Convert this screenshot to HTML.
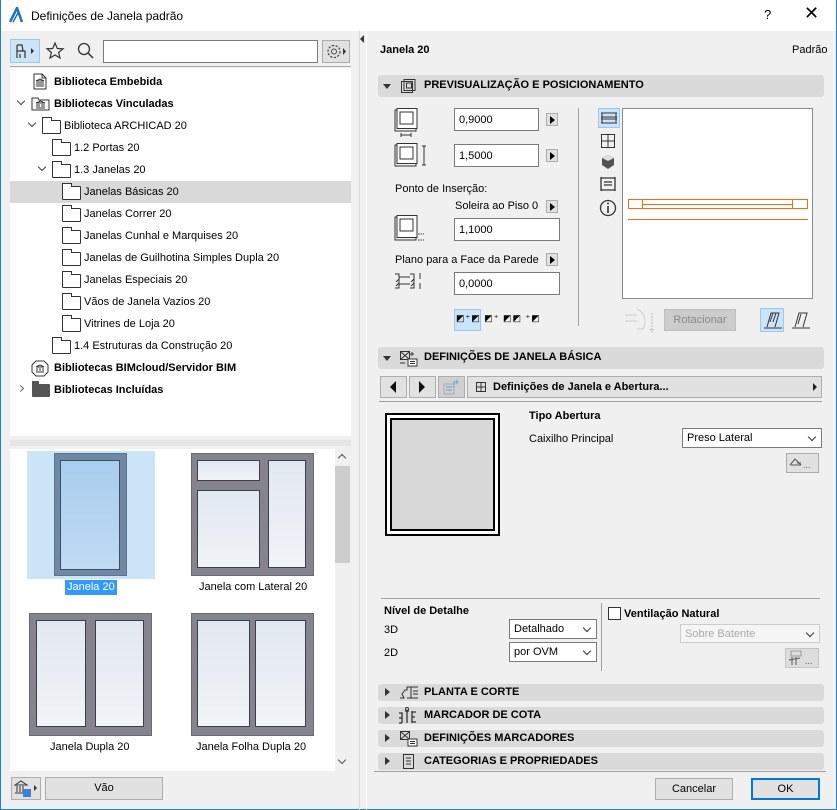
<!DOCTYPE html>
<html><head><meta charset="utf-8"><style>
*{box-sizing:border-box;margin:0;padding:0}
body{width:837px;height:810px;overflow:hidden;background:#f0f0f0;font-family:"Liberation Sans",sans-serif;font-size:11px;color:#000;position:relative}
.a{position:absolute}
.b{font-weight:bold}
.inp{position:absolute;background:#fff;border:1px solid #7a7a7a;padding:5px 4px 0;font-size:11px;height:23px}
.sb{position:absolute;width:12px;height:13px;background:#e1e1e1;border:1px solid #adadad}
.sb:after{content:"";position:absolute;left:3px;top:2px;border-left:5px solid #000;border-top:4px solid transparent;border-bottom:4px solid transparent}
.hdr{position:absolute;left:378px;width:446px;background:#dadada;border-radius:3px;font-weight:bold;font-size:11px}
.hdr span{position:absolute;left:46px;top:4px}
.tri-r{position:absolute;left:7px;width:0;height:0;border-left:5px solid #333;border-top:4px solid transparent;border-bottom:4px solid transparent}
.tri-d{position:absolute;left:5px;width:0;height:0;border-top:5px solid #333;border-left:4px solid transparent;border-right:4px solid transparent}
.fold{position:absolute;width:19px;height:14px;border:1px solid #333;border-radius:1px;background:#fff}
.fold:before{content:"";position:absolute;left:-1px;top:-4px;width:8px;height:3px;border:1px solid #333;border-bottom:none;background:#fff}
.row{position:absolute;height:22px;line-height:22px;font-size:11px}
.chev{position:absolute;width:6px;height:6px;border-right:1.5px solid #444;border-bottom:1.5px solid #444;transform:rotate(45deg)}
.btn{position:absolute;background:#e1e1e1;border:1px solid #adadad;text-align:center;font-size:11px}
.sel{position:absolute;background:#fff;border:1px solid #7a7a7a;padding:3px 4px;height:21px;font-size:11px}
.sel:after{content:"";position:absolute;right:6px;top:5px;width:5px;height:5px;border-right:1px solid #333;border-bottom:1px solid #333;transform:rotate(45deg)}
.win{position:absolute;background:#85848e;border:1px solid #6a6a72}
.gl{position:absolute;background:linear-gradient(#e2e8f0,#f0f3f7);border:1.5px solid #3e3e46}
</style></head><body>
<div class="a" style="left:0;top:0;width:837px;height:810px;border:1px solid #1883d7;border-top:none"></div>
<div class="a" style="left:1px;top:0;width:835px;height:31px;background:#fff"></div>
<svg class="a" style="left:8px;top:7px" width="16" height="16"><path d="M2 15 L9 1 L14 15" fill="none" stroke="#1d6fc4" stroke-width="2.5"/><path d="M5 15 L10 6" stroke="#1d6fc4" stroke-width="1.5"/></svg>
<div class="a" style="left:31px;top:9px;font-size:12px">Definições de Janela padrão</div>
<div class="a" style="left:764px;top:7px;font-size:13px">?</div>
<div class="a" style="left:804px;top:3px;font-size:18px;font-weight:200">✕</div>

<div class="a" style="left:10px;top:39px;width:30px;height:24px;background:#cce4f7;border:1px solid #99c9ef"></div>
<svg class="a" style="left:14px;top:42px" width="24" height="18"><path d="M3 3 L3 16 M3 9 L11 9 L11 16 M3 3 L8 3 L9 9 M6 12 L6 16" fill="none" stroke="#333" stroke-width="1.2"/><path d="M17 6 L20 9 L17 12Z" fill="#333"/></svg>
<svg class="a" style="left:45px;top:41px" width="20" height="20"><path d="M10 2 L12.3 7.5 L18 7.8 L13.6 11.5 L15 17 L10 14 L5 17 L6.4 11.5 L2 7.8 L7.7 7.5Z" fill="none" stroke="#333" stroke-width="1.2"/></svg>
<svg class="a" style="left:76px;top:41px" width="20" height="20"><circle cx="8" cy="8" r="5.5" fill="none" stroke="#333" stroke-width="1.3"/><path d="M12 12 L17 17" stroke="#333" stroke-width="1.5"/></svg>
<div class="a" style="left:103px;top:40px;width:215px;height:23px;background:#fff;border:1px solid #7a7a7a"></div>
<div class="a" style="left:322px;top:40px;width:28px;height:23px;background:#e1e1e1;border:1px solid #adadad"></div>
<svg class="a" style="left:325px;top:43px" width="24" height="17"><circle cx="9" cy="8.5" r="6" fill="none" stroke="#444" stroke-width="1.2" stroke-dasharray="2.2 1.5"/><circle cx="9" cy="8.5" r="2.5" fill="none" stroke="#444"/><path d="M18 5 L21 8.5 L18 12Z" fill="#333"/></svg>
<div class="a" style="left:10px;top:66px;width:341px;height:1px;background:#aaa"></div>

<div class="a" style="left:10px;top:68px;width:341px;height:368px;background:#fff"></div>
<div class="a" style="left:10px;top:181px;width:341px;height:22px;background:#d9d9d9"></div>
<svg class="a" style="left:33px;top:73px" width="14" height="17"><path d="M1 1 L9 1 L13 5 L13 16 L1 16Z M9 1 L9 5 L13 5" fill="#fff" stroke="#333"/><path d="M3 13 L11 13 M4 12 L4 9 M6 12 L6 9 M8 12 L8 9 M10 12 L10 9 M3 8 L7 6 L11 8Z" stroke="#333" fill="none"/></svg>
<div class="row b" style="left:54px;top:71px">Biblioteca Embebida</div>
<div class="chev" style="left:18px;top:98px"></div>
<svg class="a" style="left:31px;top:95px" width="19" height="16"><path d="M1 3 L7 3 L8 5 L18 5 L18 15 L1 15Z" fill="#fff" stroke="#333"/><path d="M5 13 L14 13 M6 12 L6 9 M8 12 L8 9 M11 12 L11 9 M13 12 L13 9 M5 8 L9.5 6 L14 8Z" stroke="#333" fill="none"/></svg>
<div class="row b" style="left:54px;top:93px">Bibliotecas Vinculadas</div>
<div class="chev" style="left:29px;top:120px"></div>
<div class="fold" style="left:42px;top:120px"></div>
<div class="row" style="left:64px;top:115px">Biblioteca ARCHICAD 20</div>
<div class="fold" style="left:52px;top:142px"></div>
<div class="row" style="left:74px;top:137px">1.2 Portas 20</div>
<div class="chev" style="left:39px;top:164px"></div>
<div class="fold" style="left:52px;top:164px"></div>
<div class="row" style="left:74px;top:159px">1.3 Janelas 20</div>
<div class="fold" style="left:62px;top:186px"></div>
<div class="row" style="left:84px;top:181px">Janelas Básicas 20</div>
<div class="fold" style="left:62px;top:208px"></div>
<div class="row" style="left:84px;top:203px">Janelas Correr 20</div>
<div class="fold" style="left:62px;top:230px"></div>
<div class="row" style="left:84px;top:225px">Janelas Cunhal e Marquises 20</div>
<div class="fold" style="left:62px;top:252px"></div>
<div class="row" style="left:84px;top:247px">Janelas de Guilhotina Simples Dupla 20</div>
<div class="fold" style="left:62px;top:274px"></div>
<div class="row" style="left:84px;top:269px">Janelas Especiais 20</div>
<div class="fold" style="left:62px;top:296px"></div>
<div class="row" style="left:84px;top:291px">Vãos de Janela Vazios 20</div>
<div class="fold" style="left:62px;top:318px"></div>
<div class="row" style="left:84px;top:313px">Vitrines de Loja 20</div>
<div class="fold" style="left:52px;top:340px"></div>
<div class="row" style="left:74px;top:335px">1.4 Estruturas da Construção 20</div>
<svg class="a" style="left:31px;top:360px" width="18" height="17"><path d="M5 1 L13 1 L17 5 L17 12 L13 16 L5 16 L1 12 L1 5Z" fill="#fff" stroke="#333"/><path d="M5 12 L13 12 M6 11 L6 8 M9 11 L9 8 M12 11 L12 8 M5 7 L9 5 L13 7Z" stroke="#333" fill="none"/></svg>
<div class="row b" style="left:54px;top:357px">Bibliotecas BIMcloud/Servidor BIM</div>
<div class="a" style="left:18px;top:386px;width:5px;height:5px;border-right:1.5px solid #666;border-top:1.5px solid #666;transform:rotate(45deg)"></div>
<div class="a" style="left:32px;top:384px;width:18px;height:13px;background:#555;border-radius:1px"></div>
<div class="a" style="left:32px;top:381px;width:7px;height:4px;background:#555"></div>
<div class="row b" style="left:54px;top:379px">Bibliotecas Incluídas</div>

<div class="a" style="left:10px;top:440px;width:341px;height:6px;background:#e6e6e6"></div>
<div class="a" style="left:10px;top:449px;width:325px;height:322px;background:#fff"></div>
<div class="a" style="left:335px;top:449px;width:16px;height:322px;background:#f0f0f0"></div>
<div class="a" style="left:335px;top:466px;width:15px;height:97px;background:#cdcdcd"></div>
<div class="a" style="left:339px;top:455px;width:6px;height:6px;border-left:1.5px solid #555;border-top:1.5px solid #555;transform:rotate(45deg)"></div>
<div class="a" style="left:339px;top:757px;width:6px;height:6px;border-right:1.5px solid #555;border-bottom:1.5px solid #555;transform:rotate(45deg)"></div>
<div class="a" style="left:27px;top:451px;width:128px;height:128px;background:#cce4f7"></div>
<div class="win" style="left:54px;top:453px;width:73px;height:123px;background:#6f88a4;border-color:#5a7492"></div>
<div class="gl" style="left:60px;top:460px;width:60px;height:110px;background:linear-gradient(#a9cdee,#c0daf2);border-color:#3e4e62"></div>
<div class="a" style="left:65px;top:580px;height:15px;padding:1px 2px;background:#3399ff;color:#fff;font-size:11px">Janela 20</div>
<div class="win" style="left:191px;top:453px;width:123px;height:123px"></div>
<div class="gl" style="left:197px;top:460px;width:63px;height:21px"></div>
<div class="gl" style="left:197px;top:490px;width:63px;height:78px"></div>
<div class="gl" style="left:268px;top:460px;width:38px;height:108px"></div>
<div class="a" style="left:199px;top:581px;font-size:11px">Janela com Lateral 20</div>
<div class="win" style="left:29px;top:613px;width:123px;height:123px"></div>
<div class="gl" style="left:36px;top:620px;width:50px;height:107px"></div>
<div class="gl" style="left:95px;top:620px;width:49px;height:107px"></div>
<div class="a" style="left:50px;top:741px;font-size:11px">Janela Dupla 20</div>
<div class="win" style="left:191px;top:613px;width:123px;height:123px"></div>
<div class="gl" style="left:197px;top:620px;width:53px;height:107px"></div>
<div class="gl" style="left:255px;top:620px;width:51px;height:107px"></div>
<div class="a" style="left:196px;top:741px;font-size:11px">Janela Folha Dupla 20</div>
<div class="btn" style="left:11px;top:777px;width:30px;height:23px"></div>
<svg class="a" style="left:13px;top:779px" width="27" height="20"><path d="M2 14 L14 14 M4 13 L4 7 M7 13 L7 7 M10 13 L10 7 M2 6 L8 2 L14 6Z" stroke="#333" fill="none"/><rect x="10" y="10" width="8" height="8" fill="#3b82d6"/><path d="M21 6 L24 9 L21 12Z" fill="#333"/></svg>
<div class="btn" style="left:45px;top:777px;width:118px;height:23px;line-height:21px">Vão</div>
<div class="a" style="left:359px;top:31px;width:1px;height:779px;background:#dcdcdc"></div>
<div class="a" style="left:360px;top:35px;width:0;height:0;border-right:4px solid #333;border-top:4px solid transparent;border-bottom:4px solid transparent"></div>

<div class="a" style="left:366px;top:31px;width:1px;height:779px;background:#fff"></div>
<div class="a b" style="left:380px;top:44px">Janela 20</div>
<div class="a" style="left:792px;top:44px">Padrão</div>

<div class="hdr" style="top:75px;height:22px"><div class="tri-d" style="top:9px"></div>
<svg class="a" style="left:22px;top:3px" width="16" height="16"><rect x="1.5" y="3.5" width="11" height="11" fill="none" stroke="#333"/><rect x="4" y="1.5" width="11" height="11" fill="none" stroke="#333"/><rect x="6.5" y="5" width="5" height="5" fill="none" stroke="#333"/></svg>
<span>PREVISUALIZAÇÃO E POSICIONAMENTO</span></div>

<svg class="a" style="left:394px;top:108px" width="30" height="30"><rect x="1" y="2" width="21" height="21" fill="none" stroke="#333"/><rect x="3" y="0.5" width="20" height="20" fill="#fff" stroke="#333"/><rect x="6" y="4" width="13" height="12" fill="none" stroke="#333"/><path d="M7 27 L17 27 M7 25 L7 29 M17 25 L17 29" stroke="#333"/></svg>
<div class="inp" style="left:454px;top:108px;width:85px">0,9000</div>
<div class="sb" style="left:546px;top:113px"></div>
<svg class="a" style="left:394px;top:143px" width="34" height="30"><rect x="1" y="2" width="21" height="21" fill="none" stroke="#333"/><rect x="3" y="0.5" width="20" height="20" fill="#fff" stroke="#333"/><rect x="6" y="4" width="13" height="12" fill="none" stroke="#333"/><path d="M30 3 L30 22 M28 3 L32 3 M28 22 L32 22" stroke="#333"/></svg>
<div class="inp" style="left:454px;top:144px;width:85px">1,5000</div>
<div class="sb" style="left:546px;top:149px"></div>
<div class="a" style="left:395px;top:183px">Ponto de Inserção:</div>
<div class="a" style="left:455px;top:200px">Soleira ao Piso 0</div>
<div class="sb" style="left:546px;top:200px"></div>
<svg class="a" style="left:394px;top:215px" width="34" height="30"><rect x="1" y="2" width="21" height="23" fill="none" stroke="#333"/><rect x="3" y="0.5" width="20" height="22" fill="#fff" stroke="#333"/><rect x="6" y="4" width="13" height="12" fill="none" stroke="#333"/><path d="M24 19 L30 19 M24 25 L30 25" stroke="#333" stroke-dasharray="1.5 1"/></svg>
<div class="inp" style="left:454px;top:218px;width:106px">1,1000</div>
<div class="a" style="left:395px;top:254px">Plano para a Face da Parede</div>
<div class="sb" style="left:546px;top:253px"></div>
<svg class="a" style="left:394px;top:271px" width="34" height="20"><path d="M1 3 L5 3 L5 17 L1 17 M16 3 L20 3 L20 17 L16 17 M5 6 L16 6 M5 13 L16 13" stroke="#333" fill="none"/><path d="M2 15 L5 12 M2 11 L5 8 M17 15 L20 12 M17 11 L20 8" stroke="#333"/><path d="M26 2 L26 8 M26 12 L26 18" stroke="#333"/></svg>
<div class="inp" style="left:454px;top:272px;width:106px">0,0000</div>
<div class="a" style="left:454px;top:309px;width:27px;height:22px;background:#cce4f7;border:1px solid #99c9ef"></div>
<div class="a" style="left:456px;top:313px;font-size:9px;letter-spacing:1px">◩⁺◩ ◩⁺ ◩◩ ⁺◩</div>
<div class="a" style="left:578px;top:108px;width:1px;height:218px;background:#a0a0a0"></div>
<div class="a" style="left:598px;top:108px;width:22px;height:20px;background:#cce4f7;border:1px solid #99c9ef"></div>
<svg class="a" style="left:600px;top:111px" width="18" height="14"><path d="M1 2 L17 2 M1 12 L17 12 M2 2 L2 12 M16 2 L16 12 M1 6 L17 6 M1 8 L17 8" stroke="#333" fill="none"/></svg>
<svg class="a" style="left:600px;top:133px" width="16" height="16"><rect x="1.5" y="1.5" width="13" height="13" fill="none" stroke="#333"/><path d="M8 1 L8 15 M1 8 L15 8" stroke="#333"/></svg>
<svg class="a" style="left:600px;top:154px" width="16" height="16"><path d="M8 1 L14 4 L14 11 L8 15 L2 11 L2 4Z" fill="#555"/><path d="M2 4 L8 7 L14 4 L8 1Z" fill="#ddd"/></svg>
<svg class="a" style="left:600px;top:176px" width="16" height="16"><path d="M1 1 L1 15 M15 1 L15 15 M1 2 L15 2 M1 14 L15 14 M4 6 L12 6 M4 9 L12 9" stroke="#333" fill="none" stroke-width="1.3"/></svg>
<svg class="a" style="left:599px;top:199px" width="18" height="18"><circle cx="9" cy="9" r="7.5" fill="none" stroke="#333" stroke-width="1.3"/><path d="M9 7 L9 14" stroke="#333" stroke-width="1.6"/><circle cx="9" cy="4.5" r="1" fill="#333"/></svg>
<div class="a" style="left:622px;top:108px;width:191px;height:191px;background:#fff;border:1px solid #8a8a8a"></div>
<div class="a" style="left:628px;top:199px;width:180px;height:10px;border:1px solid #f26b0f"></div>
<div class="a" style="left:642px;top:199px;width:1px;height:10px;background:#f26b0f"></div>
<div class="a" style="left:792px;top:199px;width:1px;height:10px;background:#f26b0f"></div>
<div class="a" style="left:642px;top:204px;width:150px;height:1px;background:#f26b0f"></div>
<div class="a" style="left:628px;top:219px;width:180px;height:1px;background:#f26b0f"></div>
<svg class="a" style="left:621px;top:307px" width="40" height="28"><path d="M4 8 L16 8 M4 14 L16 14 M16 2 A14 14 0 0 1 22 22 L16 22" stroke="#ccc" fill="none"/><path d="M31 6 L31 24 M29 22 L31 25 L33 22" stroke="#bbb" fill="none" stroke-dasharray="2 1"/></svg>
<div class="btn" style="left:664px;top:309px;width:72px;height:22px;line-height:20px;color:#888;background:#ccc;border-color:#bfbfbf">Rotacionar</div>
<div class="a" style="left:760px;top:308px;width:24px;height:24px;background:#cce4f7;border:1px solid #99c9ef"></div>
<svg class="a" style="left:762px;top:310px" width="22" height="20"><path d="M2 18 L20 18 M5 17 L9 3 L17 3 L13 17 M8 12 L11 3 M11 12 L14 3" stroke="#333" fill="none"/></svg>
<svg class="a" style="left:790px;top:310px" width="22" height="20"><path d="M2 18 L20 18 M5 17 L9 3 L17 3 L13 17 M8 14 L11 4" stroke="#333" fill="none"/></svg>

<div class="hdr" style="top:347px;height:22px"><div class="tri-d" style="top:9px"></div>
<svg class="a" style="left:21px;top:3px" width="20" height="17"><rect x="1.5" y="1.5" width="9" height="8" fill="none" stroke="#333"/><path d="M2 2 L10 9 M10 2 L2 9" stroke="#333"/><rect x="9" y="9" width="9" height="7" fill="#fff" stroke="#333"/><path d="M11 11.5 L16 11.5 M11 13.5 L16 13.5 M1 13 L6 13 M13 2 L13 6 M11 4 L15 4" stroke="#333"/></svg>
<span>DEFINIÇÕES DE JANELA BÁSICA</span></div>
<div class="btn" style="left:380px;top:376px;width:27px;height:22px"></div>
<div class="a" style="left:390px;top:381px;border-right:6px solid #111;border-top:6px solid transparent;border-bottom:6px solid transparent"></div>
<div class="btn" style="left:409px;top:376px;width:27px;height:22px"></div>
<div class="a" style="left:419px;top:381px;border-left:6px solid #111;border-top:6px solid transparent;border-bottom:6px solid transparent"></div>
<div class="btn" style="left:438px;top:376px;width:27px;height:22px;background:#d0d0d0"></div>
<svg class="a" style="left:442px;top:378px" width="20" height="18"><rect x="2" y="6" width="10" height="10" fill="none" stroke="#aaa"/><path d="M4 9 L10 9 M4 12 L10 12 M12 10 L12 4 L16 4 M14 2 L16 4 L14 6" stroke="#7fb0e6" fill="none" stroke-width="1.5"/></svg>
<div class="btn" style="left:467px;top:376px;width:355px;height:22px;text-align:left"></div>
<svg class="a" style="left:475px;top:381px" width="12" height="12"><rect x="1.5" y="1.5" width="9" height="9" fill="none" stroke="#333"/><path d="M6 1 L6 11 M1 6 L11 6" stroke="#333"/></svg>
<div class="a b" style="left:493px;top:381px">Definições de Janela e Abertura...</div>
<div class="a" style="left:813px;top:383px;border-left:4px solid #222;border-top:4px solid transparent;border-bottom:4px solid transparent"></div>
<div class="a" style="left:379px;top:401px;width:443px;height:1px;background:#a0a0a0"></div>
<div class="a" style="left:385px;top:413px;width:115px;height:123px;border:2px solid #000;background:#fff"></div>
<div class="a" style="left:390px;top:418px;width:105px;height:113px;border:2px solid #000;background:#d8d8d8"></div>
<div class="a b" style="left:529px;top:410px">Tipo Abertura</div>
<div class="a" style="left:529px;top:433px">Caixilho Principal</div>
<div class="sel" style="left:682px;top:428px;width:140px;height:20px;color:#000">Preso Lateral</div>
<div class="btn" style="left:786px;top:453px;width:33px;height:20px"></div>
<svg class="a" style="left:789px;top:456px" width="28" height="14"><path d="M1 9 L6 3 L12 9 M2 9 L12 9 M8 7 L12 7" stroke="#555" fill="none"/><text x="14" y="12" font-size="9" fill="#555" font-family="Liberation Sans">...</text></svg>
<div class="a" style="left:381px;top:598px;width:439px;height:1px;background:#a0a0a0"></div>
<div class="a" style="left:601px;top:603px;width:1px;height:68px;background:#a0a0a0"></div>
<div class="a b" style="left:384px;top:605px">Nível de Detalhe</div>
<div class="a" style="left:384px;top:624px">3D</div>
<div class="a" style="left:384px;top:647px">2D</div>
<div class="sel" style="left:509px;top:619px;width:88px;height:20px">Detalhado</div>
<div class="sel" style="left:509px;top:642px;width:88px;height:20px">por OVM</div>
<div class="a" style="left:608px;top:607px;width:13px;height:13px;border:1px solid #333;background:#fff"></div>
<div class="a b" style="left:624px;top:608px">Ventilação Natural</div>
<div class="sel" style="left:680px;top:624px;width:140px;height:19px;color:#aaa;border-color:#ccc;background:#f5f5f5">Sobre Batente</div>
<div class="btn" style="left:785px;top:648px;width:34px;height:20px;background:#ddd;border-color:#c5c5c5"></div>
<svg class="a" style="left:788px;top:650px" width="30" height="16"><rect x="3" y="1" width="10" height="5" fill="none" stroke="#999"/><path d="M1 10 L12 8 M4 7 L4 15 M8 7 L8 15" stroke="#555" fill="none"/><text x="17" y="14" font-size="9" fill="#555" font-family="Liberation Sans">...</text></svg>

<div class="hdr" style="top:684px;height:17px"><div class="tri-r" style="top:4px"></div>
<svg class="a" style="left:21px;top:1px" width="20" height="15"><path d="M1 13 L5 13 L3 9 L6 5 L8 5 L8 2 L19 2 M12 2 L12 13 M8 13 L19 13 M14 6 L19 6 M14 9 L19 9" stroke="#333" fill="none"/></svg>
<span style="top:2px">PLANTA E CORTE</span></div>
<div class="hdr" style="top:707px;height:17px"><div class="tri-r" style="top:4px"></div>
<svg class="a" style="left:20px;top:0px" width="22" height="17"><path d="M1 6 L4 6 L4 16 M1 11 L4 11 M1 16 L4 16 M9 4 L9 16 M7 4 L11 4 M14 4 L14 16 M14 5 L18 5 M14 10 L17 10 M14 15 L18 15" stroke="#333" fill="none" stroke-width="1.3"/><circle cx="9" cy="2" r="1.5" fill="none" stroke="#333"/></svg>
<span style="top:2px">MARCADOR DE COTA</span></div>
<div class="hdr" style="top:730px;height:17px"><div class="tri-r" style="top:4px"></div>
<svg class="a" style="left:21px;top:0px" width="20" height="17"><rect x="1.5" y="1.5" width="9" height="8" fill="none" stroke="#333"/><path d="M2 2 L10 9 M10 2 L2 9" stroke="#333"/><rect x="9" y="9" width="9" height="7" fill="#fff" stroke="#333"/><path d="M11 11.5 L16 11.5 M11 13.5 L16 13.5" stroke="#333"/></svg>
<span style="top:2px">DEFINIÇÕES MARCADORES</span></div>
<div class="hdr" style="top:753px;height:17px"><div class="tri-r" style="top:4px"></div>
<svg class="a" style="left:24px;top:1px" width="14" height="15"><rect x="1.5" y="0.5" width="10" height="14" fill="none" stroke="#333"/><path d="M4 4 L9 4 M4 7 L9 7 M4 10 L9 10" stroke="#333"/></svg>
<span style="top:2px">CATEGORIAS E PROPRIEDADES</span></div>
<div class="a" style="left:374px;top:771px;width:452px;height:1px;background:#a0a0a0"></div>
<div class="btn" style="left:655px;top:778px;width:78px;height:22px;line-height:20px">Cancelar</div>
<div class="btn" style="left:751px;top:778px;width:69px;height:22px;line-height:18px;border:2px solid #0078d7">OK</div>
</body></html>
